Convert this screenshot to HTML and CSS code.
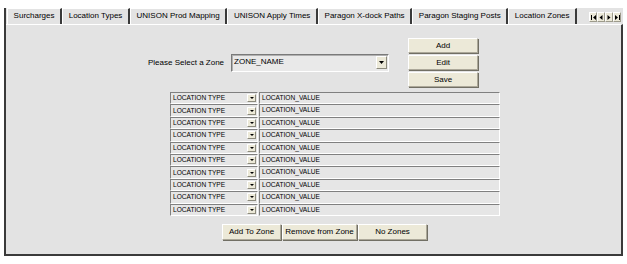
FILE: index.html
```html
<!DOCTYPE html>
<html>
<head>
<meta charset="utf-8">
<link rel="stylesheet" href="styles.css">
</head>
<body>
<div class="window">
  <div class="tabbar">
    <div class="tabs">
      <div class="tab">Surcharges</div>
      <div class="tab">Location Types</div>
      <div class="tab">UNISON Prod Mapping</div>
      <div class="tab">UNISON Apply Times</div>
      <div class="tab">Paragon X-dock Paths</div>
      <div class="tab">Paragon Staging Posts</div>
      <div class="tab active">Location Zones</div>
    </div>
    <div class="nav">
      <span class="nav-btn"><svg width="5" height="5" viewBox="0 0 5 5"><rect x="0" y="0" width="1" height="5" fill="#000"/><polygon points="5,0 5,5 2,2.5" fill="#000"/></svg></span>
      <span class="nav-btn"><svg width="4" height="5" viewBox="0 0 4 5"><polygon points="3.5,0 3.5,5 0.5,2.5" fill="#000"/></svg></span>
      <span class="nav-btn"><svg width="4" height="5" viewBox="0 0 4 5"><polygon points="0.5,0 0.5,5 3.5,2.5" fill="#000"/></svg></span>
      <span class="nav-btn"><svg width="5" height="5" viewBox="0 0 5 5"><polygon points="0,0 0,5 3,2.5" fill="#000"/><rect x="4" y="0" width="1" height="5" fill="#000"/></svg></span>
    </div>
  </div>
  <div class="panel">
    <div class="zone-row">
      <span class="zone-label">Please Select a Zone</span>
      <div class="combo">
        <span class="combo-text">ZONE_NAME</span>
        <span class="combo-btn"><svg width="5" height="3" viewBox="0 0 5 3"><polygon points="0,0 5,0 2.5,3" fill="#000"/></svg></span>
      </div>
      <div class="actions">
        <button class="btn">Add</button>
        <button class="btn">Edit</button>
        <button class="btn">Save</button>
      </div>
    </div>
    <div class="grid">
      <div class="loc-select"><span class="loc-text">LOCATION TYPE</span><span class="mini-btn"><svg width="4" height="2" viewBox="0 0 4 2"><polygon points="0,0 4,0 2,2" fill="#000"/></svg></span></div><div class="loc-value">LOCATION_VALUE</div>
      <div class="loc-select"><span class="loc-text">LOCATION TYPE</span><span class="mini-btn"><svg width="4" height="2" viewBox="0 0 4 2"><polygon points="0,0 4,0 2,2" fill="#000"/></svg></span></div><div class="loc-value">LOCATION_VALUE</div>
      <div class="loc-select"><span class="loc-text">LOCATION TYPE</span><span class="mini-btn"><svg width="4" height="2" viewBox="0 0 4 2"><polygon points="0,0 4,0 2,2" fill="#000"/></svg></span></div><div class="loc-value">LOCATION_VALUE</div>
      <div class="loc-select"><span class="loc-text">LOCATION TYPE</span><span class="mini-btn"><svg width="4" height="2" viewBox="0 0 4 2"><polygon points="0,0 4,0 2,2" fill="#000"/></svg></span></div><div class="loc-value">LOCATION_VALUE</div>
      <div class="loc-select"><span class="loc-text">LOCATION TYPE</span><span class="mini-btn"><svg width="4" height="2" viewBox="0 0 4 2"><polygon points="0,0 4,0 2,2" fill="#000"/></svg></span></div><div class="loc-value">LOCATION_VALUE</div>
      <div class="loc-select"><span class="loc-text">LOCATION TYPE</span><span class="mini-btn"><svg width="4" height="2" viewBox="0 0 4 2"><polygon points="0,0 4,0 2,2" fill="#000"/></svg></span></div><div class="loc-value">LOCATION_VALUE</div>
      <div class="loc-select"><span class="loc-text">LOCATION TYPE</span><span class="mini-btn"><svg width="4" height="2" viewBox="0 0 4 2"><polygon points="0,0 4,0 2,2" fill="#000"/></svg></span></div><div class="loc-value">LOCATION_VALUE</div>
      <div class="loc-select"><span class="loc-text">LOCATION TYPE</span><span class="mini-btn"><svg width="4" height="2" viewBox="0 0 4 2"><polygon points="0,0 4,0 2,2" fill="#000"/></svg></span></div><div class="loc-value">LOCATION_VALUE</div>
      <div class="loc-select"><span class="loc-text">LOCATION TYPE</span><span class="mini-btn"><svg width="4" height="2" viewBox="0 0 4 2"><polygon points="0,0 4,0 2,2" fill="#000"/></svg></span></div><div class="loc-value">LOCATION_VALUE</div>
      <div class="loc-select"><span class="loc-text">LOCATION TYPE</span><span class="mini-btn"><svg width="4" height="2" viewBox="0 0 4 2"><polygon points="0,0 4,0 2,2" fill="#000"/></svg></span></div><div class="loc-value">LOCATION_VALUE</div>
    </div>
    <div class="bottom-buttons">
      <button class="btn btn-add">Add To Zone</button>
      <button class="btn btn-remove">Remove from Zone</button>
      <button class="btn btn-none">No Zones</button>
    </div>
  </div>
</div>
</body>
</html>
```

FILE: styles.css
```css
* {
  box-sizing: border-box;
}

body {
  margin: 0;
  background: #ffffff;
  font-family: "Liberation Sans", Arial, sans-serif;
  font-size: 8px;
  color: #000;
}

.window {
  margin: 8px 0 0 4px;
  width: 619px;
  height: 248px;
  background: #e3e3e3;
  border-left: 2px solid #3a3a3a;
  display: flex;
  flex-direction: column;
}

.tabbar {
  height: 16px;
  display: flex;
  align-items: flex-start;
  padding-left: 1px;
}

.tabs {
  display: flex;
}

.tab {
  height: 16px;
  padding: 0 5.6px;
  line-height: 14px;
  border-top: 1px solid #ffffff;
  border-left: 1px solid #ffffff;
  border-right: 2px solid #3a3a3a;
  white-space: nowrap;
}

.tab.active {
  background: #e3e3e3;
}

.nav {
  display: flex;
  margin: 4px 2px 0 auto;
}

.nav-btn {
  width: 8px;
  height: 10px;
  background: #ece9d8;
  border: 1px solid;
  border-color: #ffffff #9d9b8c #9d9b8c #ffffff;
  display: flex;
  align-items: center;
  justify-content: center;
}

.panel {
  flex: 1;
  border-top: 1px solid #ffffff;
  border-right: 2px solid #3a3a3a;
  border-bottom: 2px solid #3a3a3a;
}

.zone-row {
  display: flex;
  align-items: center;
  margin: 13px 0 0 142px;
}

.zone-label {
  margin-right: 7px;
  white-space: nowrap;
}

.combo {
  width: 158px;
  height: 18px;
  margin-right: 19px;
  display: flex;
  align-items: center;
  background: #e9e9e9;
  border: 1px solid;
  border-color: #7a7a7a #ffffff #ffffff #7a7a7a;
  box-shadow: inset 1px 1px 0 #b0b0b0;
}

.combo-text {
  flex: 1;
  align-self: flex-start;
  padding: 2px 0 0 2px;
}

.combo-btn {
  width: 11px;
  height: 13px;
  margin-right: 1px;
  background: #ece9d8;
  border: 1px solid;
  border-color: #ffffff #8c8a7c #8c8a7c #ffffff;
  display: flex;
  align-items: center;
  justify-content: center;
}

.actions {
  display: flex;
  flex-direction: column;
  gap: 2px;
}

.btn {
  font-family: inherit;
  font-size: 8px;
  color: #000;
  height: 15px;
  width: 70px;
  padding: 0;
  background: #ece9d8;
  border: 1px solid;
  border-color: #ffffff #aca899 #aca899 #ffffff;
  box-shadow: 1px 1px 0 #716f64;
}

.grid {
  margin: 5px 0 0 164px;
  width: 330px;
  display: grid;
  grid-template-columns: 88px 241px;
  column-gap: 1px;
  grid-auto-rows: 12.4px;
}

.loc-select,
.loc-value {
  border: 1px solid;
  border-color: #808080 #ffffff #ffffff #808080;
  background: #e6e6e6;
  font-size: 6.6px;
  line-height: 10px;
  white-space: nowrap;
}

.loc-select {
  display: flex;
  align-items: center;
}

.loc-text {
  flex: 1;
  padding-left: 2px;
}

.loc-value {
  padding-left: 2px;
}

.mini-btn {
  width: 9px;
  height: 8px;
  margin-right: 1px;
  background: #ece9d8;
  border: 1px solid;
  border-color: #ffffff #8c8a7c #8c8a7c #ffffff;
  display: flex;
  align-items: center;
  justify-content: center;
}

.bottom-buttons {
  display: flex;
  gap: 1px;
  margin: 8px 0 0 216px;
}

.bottom-buttons .btn {
  height: 16px;
}

.btn-add {
  width: 59px;
}

.btn-remove {
  width: 75px;
}

.btn-none {
  width: 69px;
}
```
